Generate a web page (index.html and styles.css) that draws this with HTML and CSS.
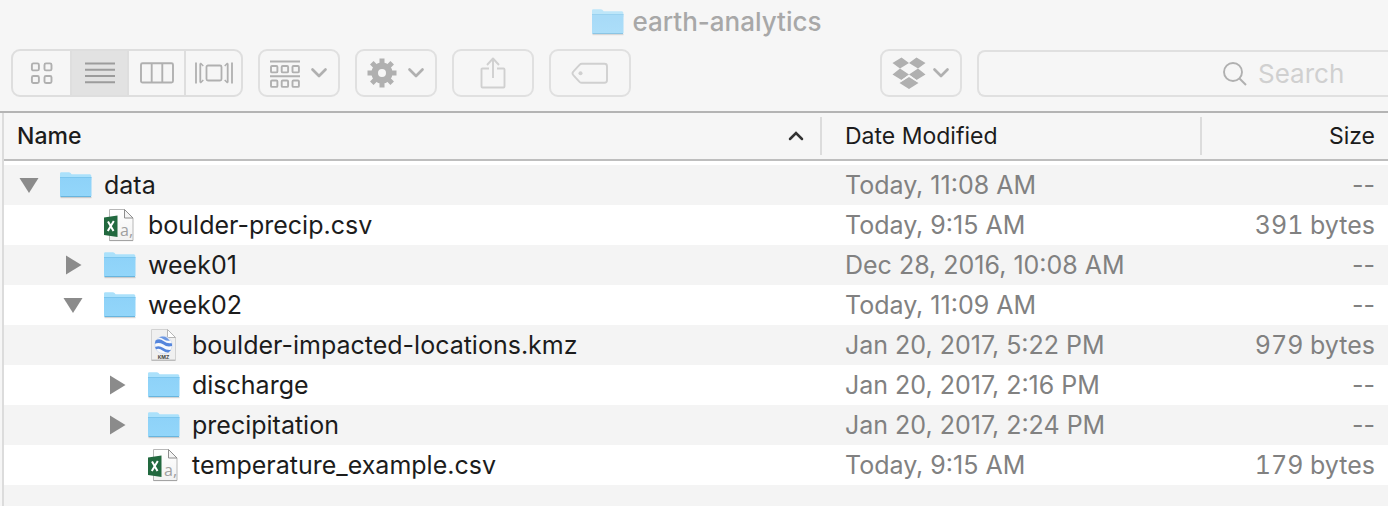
FILE: index.html
```html
<!DOCTYPE html>
<html lang="en">
<head>
<meta charset="utf-8">
<title>earth-analytics</title>
<link rel="stylesheet" href="styles.css">
</head>
<body>
<svg class="defs" aria-hidden="true">
  <defs>
    <linearGradient id="folder-front" x1="0" y1="0" x2="0" y2="1"><stop offset="0" stop-color="#8ed2f8"/><stop offset="1" stop-color="#93d6fa"/></linearGradient>
    <linearGradient id="sheet" x1="0" y1="0" x2="0" y2="1"><stop offset="0" stop-color="#fff"/><stop offset="1" stop-color="#f2f2f2"/></linearGradient>
    <symbol id="folder" viewBox="0 0 34 34">
      <path d="M1.500 29.500h31" stroke="#000" stroke-opacity=".16" stroke-width="1.400"/>
      <path d="M1 5.500q0-1.300 1.300-1.300h7.500q1 0 1.800.9l1 1.100h18.200q1.500 0 1.500 1.500V12H1z" fill="#abe1fb"/>
      <path d="M1 9.500h31.500v18q0 1.300-1.300 1.300H2.300q-1.300 0-1.300-1.300z" fill="url(#folder-front)"/>
      <path d="M1 9.500h31.500" stroke="#7cc6ee" stroke-width="1"/>
      <path d="M1.500 28.500h30.500" stroke="#68b5de" stroke-width="1"/>
    </symbol>
    <symbol id="csv" viewBox="0 0 34 34">
      <path d="M6.500 1.500h15l8.500 8.500v22.500H6.500z" fill="url(#sheet)" stroke="#b8b8b8"/>
      <path d="M21.500 1.500v8.500H30z" fill="#f5f5f5" stroke="#8e8e8e"/>
      <path d="M6.500 32.600H30" stroke="#a3a3a3"/>
      <path d="M1 9.500L14.500 7.500v21.500L1 27z" fill="#22693f"/>
      <path d="M5 13.500l5.500 9.500M10.800 13l-6 10" stroke="#fff" stroke-width="2"/>
      <text class="csv-letter" x="17" y="28">a,</text>
    </symbol>
    <symbol id="kmz" viewBox="0 0 34 34">
      <path d="M4.500 1.500h16l8 8v22.500h-24z" fill="#f0f0f0" stroke="#d2d2d2"/>
      <path d="M20.500 1.500v8h8z" fill="#fff" stroke="#b5b5b5"/>
      <path d="M4.500 32.300h24" stroke="#b2b2b2"/>
      <circle cx="16.500" cy="17" r="8.700" fill="#f8fafd" stroke="#c9d6ec" stroke-width=".7"/>
      <path d="M8.500 12.500q4-2.500 8 .5t8 2q.8 1.600.5 3-4.800 1.500-9-1.700-4-2.500-8.200-.5zM8 19q4.500-2 8 .8t8 2.200l-2.500 2.400q-3 .3-6-2t-6.500-1.200z" fill="#5586dc"/>
      <path d="M12 9.500q4-2 8 .2l3 3q-3.500.5-6.500-1.500-2.200-1.500-4.500-1.700" fill="#6c97e2"/>
      <text class="kmz-letter" x="16.500" y="31" text-anchor="middle">KMZ</text>
    </symbol>
    <symbol id="open" viewBox="0 0 20 20"><path d="M.5 3h19L10 18z" fill="#8b8b8b"/></symbol>
    <symbol id="closed" viewBox="0 0 20 20"><path d="M3 .5v19L18.500 10z" fill="#8b8b8b"/></symbol>
    <symbol id="chevron" viewBox="0 0 18 12"><path d="M2.500 2.500L9 9l6.500-6.500" fill="none" stroke="currentColor" stroke-width="2.700" stroke-linecap="round" stroke-linejoin="round"/></symbol>
  </defs>
</svg>

<header class="titlebar">
  <h1 class="title"><svg class="icon title-icon" aria-hidden="true"><use href="#folder"/></svg>earth-analytics</h1>
  <div class="toolbar">
    <div class="views" role="group" aria-label="View">
      <button class="view" aria-label="Icons" aria-pressed="false"><svg width="24" height="24" viewBox="0 0 24 24" fill="none" stroke="currentColor" stroke-width="1.900"><rect x="1.900" y="2.400" width="7" height="7" rx="1.500"/><rect x="14.500" y="2.400" width="7" height="7" rx="1.500"/><rect x="1.900" y="15" width="7" height="7" rx="1.500"/><rect x="14.500" y="15" width="7" height="7" rx="1.500"/></svg></button>
      <button class="view" aria-label="List" aria-pressed="true"><svg width="30" height="24" viewBox="0 0 30 24" stroke="currentColor" stroke-width="1.900"><path d="M0 2.500h30M0 8.700h30M0 15h30M0 21.300h30"/></svg></button>
      <button class="view" aria-label="Columns" aria-pressed="false"><svg width="34" height="24" viewBox="0 0 34 24" fill="none" stroke="currentColor" stroke-width="1.900"><rect x="1" y="2.300" width="32" height="19.200" rx="1.500"/><path d="M11.700 2v19.500M22.300 2v19.500"/></svg></button>
      <button class="view" aria-label="Cover flow" aria-pressed="false"><svg width="38" height="24" viewBox="0 0 38 24" fill="none" stroke="currentColor" stroke-width="1.800"><rect x="11.500" y="4.500" width="15" height="15" rx="1.500"/><path d="M1 1.500v21M37 1.500v21M5.300 2.500v19M32.700 2.500v19"/><path d="M5.300 2l3 3M5.300 22l3-3M32.700 2l-3 3M32.700 22l-3-3" stroke-width="1.500"/></svg></button>
    </div>
    <button class="tool" aria-label="Arrange"><svg width="30" height="30" viewBox="0 0 30 30" fill="none" stroke="currentColor" stroke-width="1.900"><path d="M0 3.500h30M0 18.200h30"/><rect x="1" y="8" width="6.400" height="6.400" rx="1"/><rect x="11.700" y="8" width="6.400" height="6.400" rx="1"/><rect x="22.500" y="8" width="6.400" height="6.400" rx="1"/><rect x="1" y="22.500" width="6.400" height="6.400" rx="1"/><rect x="11.700" y="22.500" width="6.400" height="6.400" rx="1"/><rect x="22.500" y="22.500" width="6.400" height="6.400" rx="1"/></svg><svg class="chevron" aria-hidden="true"><use href="#chevron"/></svg></button>
    <button class="tool" aria-label="Action"><svg width="30" height="30" viewBox="-15 -15 30 30" fill="none" stroke="currentColor"><circle r="7.300" stroke-width="6.600"/><path d="M0-9v-5.500M0 9v5.500M-9 0h-5.500M9 0h5.500M6.500-6.500l3.700-3.700M-6.500-6.500l-3.700-3.700M6.500 6.500l3.700 3.700M-6.500 6.500l-3.700 3.700" stroke-width="5"/></svg><svg class="chevron" aria-hidden="true"><use href="#chevron"/></svg></button>
    <button class="tool faint" aria-label="Share" disabled><svg width="26" height="34" viewBox="0 0 26 34" fill="none" stroke="currentColor" stroke-width="1.900" stroke-linejoin="round"><path d="M9 12.500H2.500q-1 0-1 1v17q0 1 1 1h21q1 0 1-1v-17q0-1-1-1H17M13 22V2.500M7 9l6-6.500L19 9"/></svg></button>
    <button class="tool faint" aria-label="Edit tags" disabled><svg width="38" height="24" viewBox="0 0 38 24" fill="none" stroke="currentColor" stroke-width="1.900" stroke-linejoin="round"><path d="M11 2.800h22.500q2.500 0 2.500 2.500v14q0 2.500-2.500 2.500H11q-1.500 0-2.500-1l-6-6.500q-2-2 0-4l6-6.500q1-1 2.500-1z"/><circle cx="9.500" cy="12.300" r="2" fill="currentColor" stroke="none"/></svg></button>
    <button class="tool dropbox" aria-label="Dropbox"><svg width="34" height="32" viewBox="0 0 34 32" fill="currentColor"><path d="M9.500.5L17 6 8 11.500.5 6zM24.500.5L17 6l9 5.500L33.500 6zM.5 17.500L8 11.500l9 6L9.500 23zM33.500 17.500L26 11.500l-9 6 7.500 5.500zM17 20l9.500 6L17 32l-9.500-6z"/><path d="M6.500 25L9.500 23.700 17 18.600l7.500 5.100 3 1.300" fill="none" stroke="#f6f6f6" stroke-width="1.200"/></svg><svg class="chevron" aria-hidden="true"><use href="#chevron"/></svg></button>
    <label class="search">
      <svg width="26" height="26" viewBox="0 0 26 26" fill="none" stroke="currentColor" stroke-width="1.900" aria-hidden="true"><circle cx="11" cy="12" r="9"/><path d="M17.500 18.500l6.500 6.500"/></svg>
      <input class="search-input" type="search" placeholder="Search" aria-label="Search">
    </label>
  </div>
</header>

<main class="pane">
  <table class="files">
    <colgroup><col><col class="col-date"><col class="col-size"></colgroup>
    <thead>
      <tr>
        <th class="head-name" scope="col" aria-sort="ascending"><div class="head sorted">Name<svg width="18" height="12" viewBox="0 0 18 12" fill="none" stroke="#333" stroke-width="2.500" stroke-linecap="round" aria-hidden="true"><path d="M3 9l6-6 6 6"/></svg></div></th>
        <th scope="col"><div class="head divided">Date Modified</div></th>
        <th class="head-size" scope="col"><div class="head divided">Size</div></th>
      </tr>
    </thead>
    <tbody>
      <tr><td><div class="entry"><button class="toggle" aria-label="Collapse data"><svg class="arrow"><use href="#open"/></svg></button><svg class="icon"><use href="#folder"/></svg>data</div></td><td class="date">Today, 11:08 AM</td><td class="size">--</td></tr>
      <tr><td><div class="entry level-1"><span class="toggle"></span><svg class="icon"><use href="#csv"/></svg>boulder-precip.csv</div></td><td class="date">Today, 9:15 AM</td><td class="size bytes">391 bytes</td></tr>
      <tr><td><div class="entry level-1"><button class="toggle" aria-label="Expand week01"><svg class="arrow"><use href="#closed"/></svg></button><svg class="icon"><use href="#folder"/></svg>week01</div></td><td class="date">Dec 28, 2016, 10:08 AM</td><td class="size">--</td></tr>
      <tr><td><div class="entry level-1"><button class="toggle" aria-label="Collapse week02"><svg class="arrow"><use href="#open"/></svg></button><svg class="icon"><use href="#folder"/></svg>week02</div></td><td class="date">Today, 11:09 AM</td><td class="size">--</td></tr>
      <tr><td><div class="entry level-2"><span class="toggle"></span><svg class="icon"><use href="#kmz"/></svg>boulder-impacted-locations.kmz</div></td><td class="date">Jan 20, 2017, 5:22 PM</td><td class="size bytes">979 bytes</td></tr>
      <tr><td><div class="entry level-2"><button class="toggle" aria-label="Expand discharge"><svg class="arrow"><use href="#closed"/></svg></button><svg class="icon"><use href="#folder"/></svg>discharge</div></td><td class="date">Jan 20, 2017, 2:16 PM</td><td class="size">--</td></tr>
      <tr><td><div class="entry level-2"><button class="toggle" aria-label="Expand precipitation"><svg class="arrow"><use href="#closed"/></svg></button><svg class="icon"><use href="#folder"/></svg>precipitation</div></td><td class="date">Jan 20, 2017, 2:24 PM</td><td class="size">--</td></tr>
      <tr><td><div class="entry level-2"><span class="toggle"></span><svg class="icon"><use href="#csv"/></svg>temperature_example.csv</div></td><td class="date">Today, 9:15 AM</td><td class="size bytes">179 bytes</td></tr>
    </tbody>
  </table>
</main>
</body>
</html>
```

FILE: styles.css
```css
* { box-sizing: border-box; }

body {
  margin: 0;
  min-height: 100vh;
  display: flex;
  flex-direction: column;
  background: #f6f6f6;
  color: #1c1c1c;
  font: 25px/40px Inter, "Liberation Sans", sans-serif;
}

.defs { position: absolute; width: 0; height: 0; }

button {
  display: flex;
  align-items: center;
  justify-content: center;
  padding: 0;
  border: 0;
  background: none;
  color: inherit;
  font: inherit;
}

/* Title and toolbar */
.titlebar { border-bottom: 2px solid #b4b4b4; }

.title {
  display: flex;
  align-items: center;
  justify-content: center;
  gap: 8px;
  margin: 0;
  padding: 2px 0 0 24px;
  color: #a8a8a8;
  font-size: 26px;
  font-weight: 500;
}

.title-icon { opacity: .75; }

.toolbar {
  display: flex;
  align-items: center;
  gap: 15px;
  padding: 7px 0 14px 11px;
  color: #b0b0b0;
}

.views {
  display: flex;
  flex: none;
  height: 48px;
  border: 2px solid #dedede;
  border-radius: 9px;
  overflow: hidden;
}

.view { width: 57px; }
.view + .view { border-left: 2px solid #dedede; }
.view[aria-pressed="true"] { background: #e2e2e2; color: #9c9c9c; }

.tool {
  flex: none;
  gap: 10px;
  width: 82px;
  height: 48px;
  border: 2px solid #e0e0e0;
  border-radius: 9px;
}

.faint { color: #d0d0d0; }
.dropbox { gap: 6px; margin-left: auto; }
.chevron { width: 18px; height: 12px; }

.search {
  display: flex;
  align-items: center;
  gap: 10px;
  width: 411px;
  height: 47px;
  padding-left: 243px;
  border: 2px solid #e0e0e0;
  border-right: 0;
  border-radius: 8px 0 0 8px;
}

.search svg { flex: none; }

.search-input {
  width: 100%;
  min-width: 0;
  padding: 2px 0 0;
  border: 0;
  outline: 0;
  background: none;
  font: inherit;
  font-size: 26px;
}

.search-input::placeholder { color: #d0d0d0; opacity: 1; }

/* File list */
.pane {
  flex: 1;
  margin-left: 2px;
  border-left: 2px solid #dcdcdc;
  background: #f4f4f4;
}

.files {
  width: 100%;
  table-layout: fixed;
  border-collapse: separate;
  border-spacing: 0;
  background: #fff;
}

.col-date { width: 380px; }
.col-size { width: 188px; }

th {
  height: 48px;
  padding: 0;
  border-bottom: 2px solid #bebebe;
  background: #f6f6f6;
  font-size: 23px;
  font-weight: 400;
  text-align: left;
}

.head { line-height: 38px; }
.divided { padding-left: 23px; border-left: 2px solid #dcdcdc; }

.sorted {
  display: flex;
  align-items: center;
  justify-content: space-between;
  padding: 0 15px 0 13px;
}

.head-name { font-weight: 500; }
.head-size { padding-right: 13px; text-align: right; }

tbody::before {
  content: "";
  display: block;
  height: 4px;
}

td { height: 40px; padding: 0; }
tbody tr:nth-child(odd) { background: #f4f4f4; }
.date { padding-left: 25px; color: #818181; }
.size { padding-right: 13px; color: #818181; text-align: right; }
.bytes { font-variant-numeric: tabular-nums; }

.entry {
  display: flex;
  align-items: center;
  padding-left: 15px;
  white-space: nowrap;
}

.level-1 { padding-left: 59px; }
.level-2 { padding-left: 103px; }

.toggle { flex: none; width: 20px; height: 20px; margin-right: 20px; }
.arrow { width: 20px; height: 20px; }
.icon { flex: none; width: 34px; height: 34px; }
.entry .icon { margin-right: 11px; }

.csv-letter { fill: #a0a0a0; font: 16px "Open Sans", sans-serif; }
.kmz-letter { fill: #444; font: bold 5px Inter, sans-serif; }
```
